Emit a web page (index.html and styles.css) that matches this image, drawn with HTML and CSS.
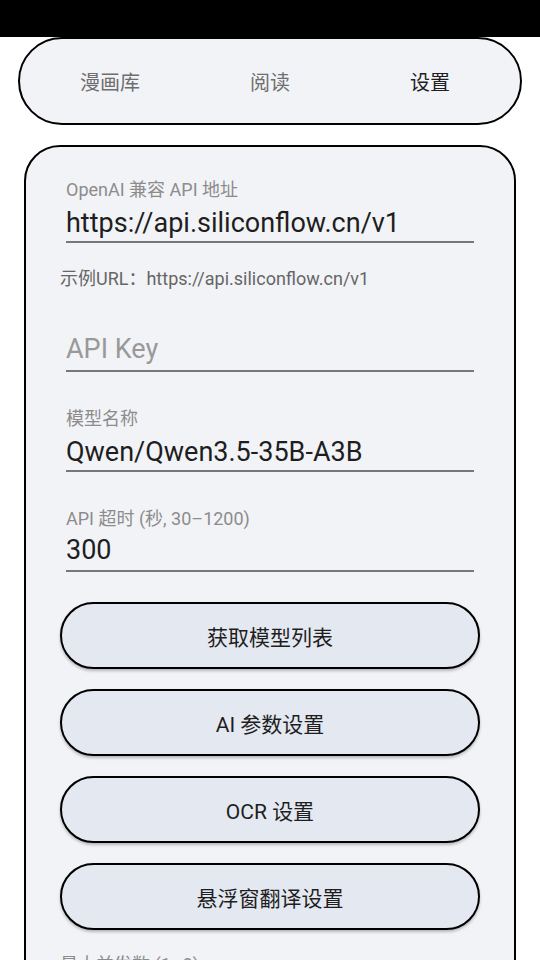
FILE: index.html
```html
<!DOCTYPE html>
<html lang="zh-CN">
<head>
    <meta charset="UTF-8">
    <meta name="viewport" content="width=device-width, initial-scale=1.0">
    <title>设置</title>
    <link rel="stylesheet" href="styles.css">
</head>
<body>
    <div class="status-bar"></div>

    <nav class="tabs">
        <div class="tab">漫画库</div>
        <div class="tab">阅读</div>
        <div class="tab active">设置</div>
    </nav>

    <div class="settings-card">
        <div class="field">
            <div class="field-label">OpenAI 兼容 API 地址</div>
            <div class="field-value">https://api.siliconflow.cn/v1</div>
        </div>
        <p class="hint">示例URL：https://api.siliconflow.cn/v1</p>

        <div class="field field-empty">
            <div class="field-value placeholder">API Key</div>
        </div>

        <div class="field field-spaced">
            <div class="field-label">模型名称</div>
            <div class="field-value">Qwen/Qwen3.5-35B-A3B</div>
        </div>

        <div class="field field-spaced">
            <div class="field-label">API 超时 (秒, 30–1200)</div>
            <div class="field-value tight">300</div>
        </div>

        <div class="button-list">
            <button class="pill-button">获取模型列表</button>
            <button class="pill-button">AI 参数设置</button>
            <button class="pill-button">OCR 设置</button>
            <button class="pill-button">悬浮窗翻译设置</button>
        </div>

        <div class="field-label cut-label">最大并发数 (1–8)</div>
    </div>
</body>
</html>
```

FILE: styles.css
```css
* { box-sizing: border-box; }
body { margin: 0; background: #ffffff; font-family: Roboto, "Noto Sans CJK SC", sans-serif; height: 960px; overflow: hidden; }
.status-bar { height: 37px; background: #000; }

.tabs { display: grid; grid-template-columns: 1fr 1fr 1fr; align-items: center; height: 88px; margin: 0 18px; padding: 0 10px; background: #f2f3f7; border: 2px solid #000; border-radius: 44px; }
.tab { text-align: center; font-size: 20px; color: #6e6e6e; }
.tab.active { color: #1e1e1e; }

.settings-card { margin: 20px 24px 0; padding: 33px 40px 0; background: #f2f3f7; border: 2px solid #000; border-radius: 36px; min-height: 900px; }

.field { border-bottom: 2px solid #777; }
.field-spaced { margin-top: 37px; }
.field-label { font-size: 18px; line-height: 20px; color: #8c8c8c; }
.field-value { margin-top: 7px; padding-bottom: 2px; font-size: 27px; line-height: 32px; color: #1e1e1e; }
.field-value.tight { margin-top: 5px; padding-bottom: 4px; }
.field-empty { margin-top: 44px; }
.field-value.placeholder { margin-top: 0; padding-bottom: 5px; color: #999; }

.hint { margin: 26px -6px 0; font-size: 18px; line-height: 20px; color: #666; }

.button-list { display: flex; flex-direction: column; gap: 20px; margin: 30px -6px 0; }
.pill-button { height: 67px; border: 2px solid #000; border-radius: 34px; background: #e4e8f1; box-shadow: 0 2px 3px rgba(0,0,0,0.25); font-family: Roboto, "Noto Sans CJK SC", sans-serif; font-size: 21px; color: #1e1e1e; cursor: pointer; }

.cut-label { margin: 25px -6px 0; }
```
